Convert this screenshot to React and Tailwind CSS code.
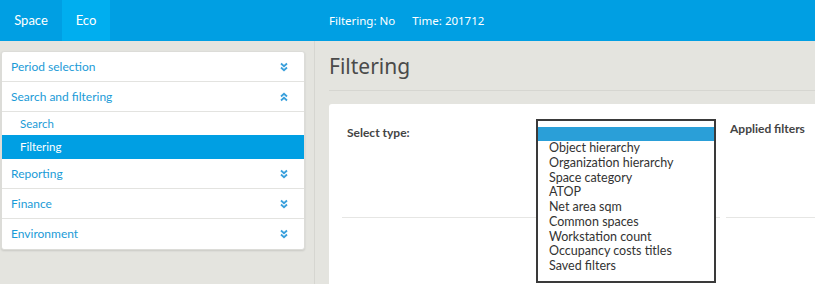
import React from 'react';

const Chevrons = ({ up = false }) => (
  <svg width="8" height="10" viewBox="0 0 8 10" className={up ? 'rotate-180' : ''}>
    <polyline points="1,1.5 4,4.2 7,1.5" fill="none" stroke="#3aa0dc" strokeWidth="1.8" />
    <polyline points="1,5.5 4,8.2 7,5.5" fill="none" stroke="#3aa0dc" strokeWidth="1.8" />
  </svg>
);

const Section = ({ label, up, last }) => (
  <div className={`h-[30px] flex items-center justify-between pl-[9px] pr-[16px] text-[12px] text-[#1b9bd7] ${last ? '' : 'border-b border-[#e3e3e0]'}`}>
    <span>{label}</span>
    <Chevrons up={up} />
  </div>
);

const options = [
  'Object hierarchy',
  'Organization hierarchy',
  'Space category',
  'ATOP',
  'Net area sqm',
  'Common spaces',
  'Workstation count',
  'Occupancy costs titles',
  'Saved filters',
];

const App = () => {
  return (
    <div className="w-[815px] h-[284px] overflow-hidden bg-[#e4e4df] font-['Lato',sans-serif]">
      <header className="h-[41px] bg-[#009fe3] flex text-white">
        <div className="w-[62px] flex items-center justify-center text-[13px]">Space</div>
        <div className="w-[48px] flex items-center justify-center bg-[#00aeef] text-[13px]">Eco</div>
        <div className="ml-[219px] flex items-center text-[11.5px] font-['Noto_Sans',sans-serif]">Filtering: No</div>
        <div className="ml-[17px] flex items-center text-[11.5px] font-['Noto_Sans',sans-serif]">Time: 201712</div>
      </header>

      <div className="flex h-[243px]">
        <aside className="w-[315px] shrink-0 border-r border-[#d6d6d1] pl-px pt-[10px]">
          <div className="w-[304px] bg-white rounded-[3px] border border-[#dcdcd8] shadow-[0_1px_2px_rgba(0,0,0,0.12)] overflow-hidden">
            <Section label="Period selection" />
            <Section label="Search and filtering" up />
            <div className="h-[23px] flex items-center pl-[18px] text-[11.5px] text-[#1b9bd7]">Search</div>
            <div className="h-[24px] flex items-center pl-[18px] text-[11.5px] text-white bg-[#009fe3]">Filtering</div>
            <Section label="Reporting" />
            <Section label="Finance" />
            <Section label="Environment" last />
          </div>
        </aside>

        <main className="flex-1 pl-[14px] flex flex-col">
          <h1 className="pt-[11px] pb-[10px] border-b border-[#d6d6d1] text-[21px] leading-[28px] text-[#4a4a4a] font-['Noto_Sans',sans-serif]">
            Filtering
          </h1>
          <div className="mt-[13px] flex-1 bg-white rounded-tl-[3px] pl-[13px] flex">
            <div className="relative w-[378px] h-[114px] border-b border-[#e6e6e4] pt-[15px] pl-[5px]">
              <span className="text-[12px] font-bold text-[#444]">Select type:</span>
              <div className="absolute left-[194px] top-[15px] w-[180px] h-[164px] bg-white border-2 border-[#3a3a3a] pt-[6px] z-10">
                <div className="h-[14px] bg-[#2a9fd8]" />
                {options.map((o) => (
                  <div key={o} className="pl-[11px] text-[12.5px] leading-[14.75px] text-[#333]">
                    {o}
                  </div>
                ))}
              </div>
            </div>
            <div className="flex-1 ml-[6px] h-[114px] border-b border-[#e6e6e4] pt-[11px] pl-[4px]">
              <span className="text-[12px] font-bold text-[#444]">Applied filters</span>
            </div>
          </div>
        </main>
      </div>
    </div>
  );
};

export default App;
